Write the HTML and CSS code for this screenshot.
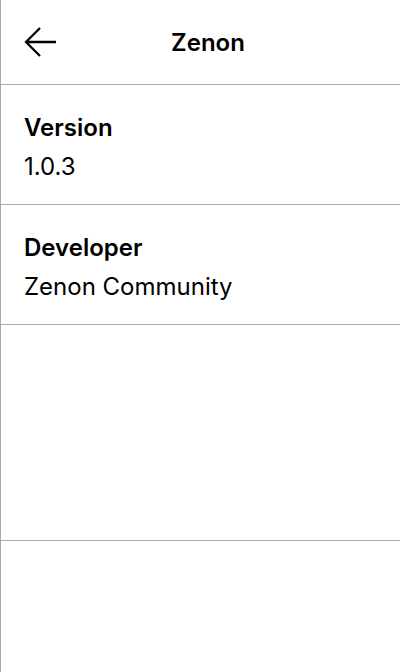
FILE: index.html
```html
<!DOCTYPE html>
<html>
<head>
<meta charset="utf-8">
<link rel="stylesheet" href="styles.css">
</head>
<body>
<div class="screen">
  <header class="header">
    <button class="back" aria-label="Back">
      <svg width="34" height="30" viewBox="0 0 34 30"><path d="M33 15H3M17 1L3 15l14 14" fill="none" stroke="#000" stroke-width="2.3"/></svg>
    </button>
    <h1 class="title">Zenon</h1>
    <div class="spacer"></div>
  </header>
  <section class="row">
    <div class="label">Version</div>
    <div class="value">1.0.3</div>
  </section>
  <section class="row">
    <div class="label">Developer</div>
    <div class="value">Zenon Community</div>
  </section>
  <section class="empty"></section>
</div>
</body>
</html>
```

FILE: styles.css
```css
html, body {
  margin: 0;
  padding: 0;
  background: #fff;
}
body {
  font-family: Inter, "Noto Sans", sans-serif;
  color: #000;
}
.screen {
  border-left: 1px solid #a9a9a9;
  min-height: 672px;
  box-sizing: border-box;
}
.header {
  height: 84px;
  border-bottom: 1px solid #a9a9a9;
  display: flex;
  align-items: center;
  padding: 0 0 0 22px;
}
.back {
  border: 0;
  background: none;
  padding: 0;
  margin: 0;
  width: 34px;
  height: 30px;
  display: flex;
  cursor: pointer;
}
.title {
  flex: 1;
  text-align: center;
  margin: 0;
  font-size: 24px;
  font-weight: 600;
}
.spacer {
  width: 41px;
}
.row {
  height: 95px;
  border-bottom: 1px solid #a9a9a9;
  padding: 24px 23px 0;
}
.label {
  font-size: 24px;
  font-weight: 600;
  line-height: 38px;
}
.value {
  font-size: 24px;
  font-weight: 400;
  line-height: 39px;
}
.empty {
  height: 215px;
  border-bottom: 1px solid #a9a9a9;
}
```
